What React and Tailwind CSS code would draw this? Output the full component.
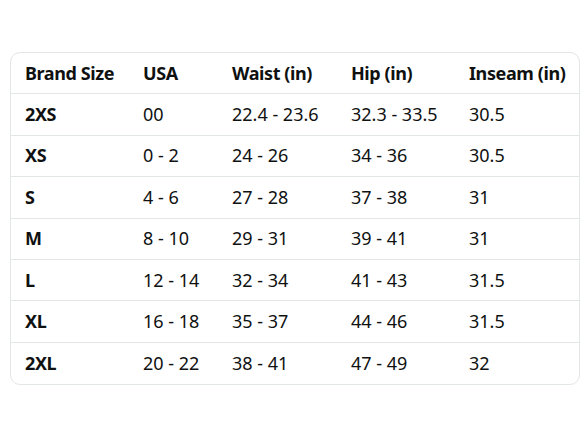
const rows = [
  ["2XS", "00", "22.4 - 23.6", "32.3 - 33.5", "30.5"],
  ["XS", "0 - 2", "24 - 26", "34 - 36", "30.5"],
  ["S", "4 - 6", "27 - 28", "37 - 38", "31"],
  ["M", "8 - 10", "29 - 31", "39 - 41", "31"],
  ["L", "12 - 14", "32 - 34", "41 - 43", "31.5"],
  ["XL", "16 - 18", "35 - 37", "44 - 46", "31.5"],
  ["2XL", "20 - 22", "38 - 41", "47 - 49", "32"],
];

const head = ["Brand Size", "USA", "Waist (in)", "Hip (in)", "Inseam (in)"];

const Row = ({ cells, bold, last }) => {
  return (
    <div
      className={`grid grid-cols-[118px_89px_119px_118px_1fr] h-[41.4px] items-center ${
        last ? "" : "border-b border-[#e3e6e6]"
      }`}
    >
      {cells.map((c, i) => (
        <div
          key={i}
          className={`pl-[14px] whitespace-nowrap ${bold || i === 0 ? "font-bold tracking-[-0.4px]" : ""}`}
        >
          {c}
        </div>
      ))}
    </div>
  );
};

export default function App() {
  return (
    <div className="w-[588px] h-[441px] bg-white pt-[52px] pl-[10px] text-[18px] text-[#0f1111] font-['Noto_Sans',sans-serif]">
      <div className="w-[570px] border border-[#e3e6e6] rounded-[10px]">
        <Row cells={head} bold />
        {rows.map((r, i) => (
          <Row key={i} cells={r} last={i === rows.length - 1} />
        ))}
      </div>
    </div>
  );
}
